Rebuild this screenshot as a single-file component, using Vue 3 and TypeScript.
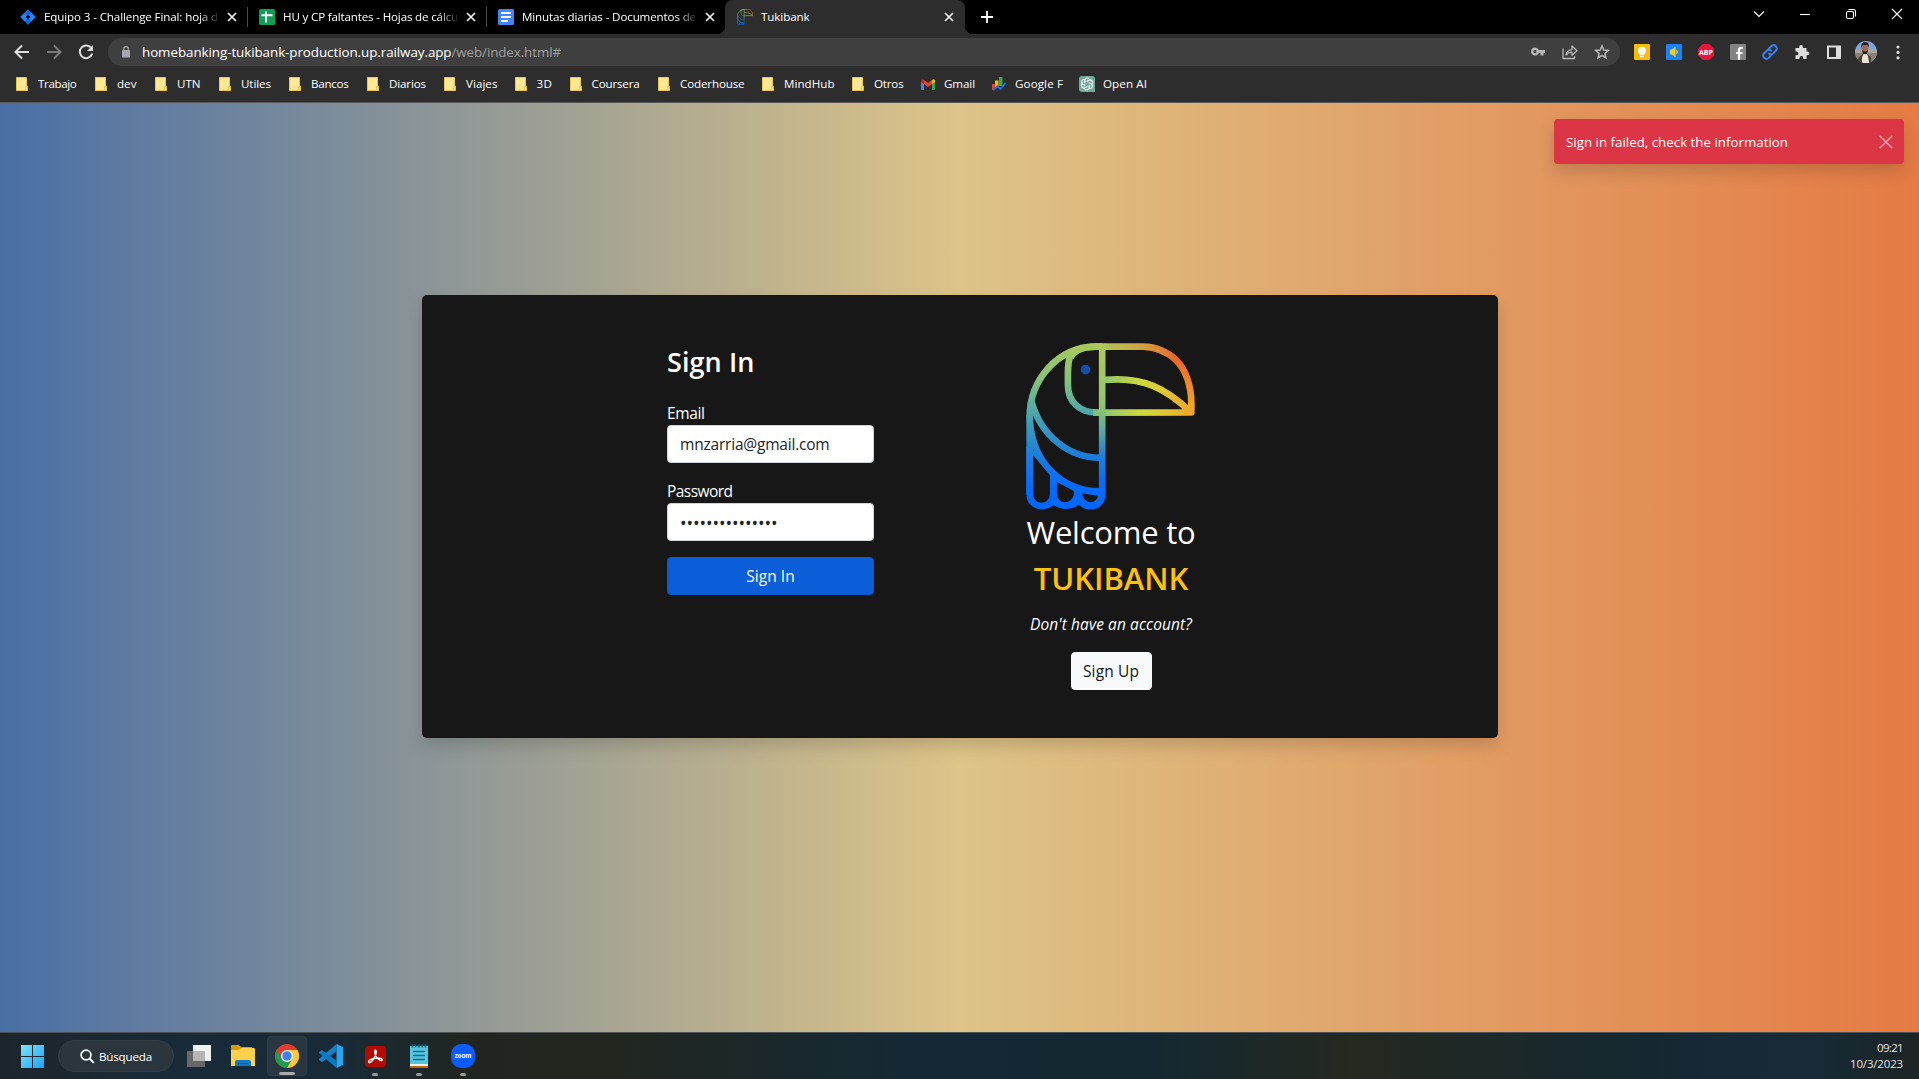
<script setup lang="ts">
type IconName = 'folder' | 'gmail' | 'finance' | 'openai'

/* label, entry start, label start, label end, icon */
const raw: [string, number, number, number, IconName][] = [
  ['Trabajo', 16, 38, 76.5, 'folder'],
  ['dev', 95, 117, 136.5, 'folder'],
  ['UTN', 155, 177, 200.5, 'folder'],
  ['Utiles', 219, 241, 271, 'folder'],
  ['Bancos', 289, 311, 348.5, 'folder'],
  ['Diarios', 367, 389, 426, 'folder'],
  ['Viajes', 444, 466, 497.5, 'folder'],
  ['3D', 515, 536.5, 552.5, 'folder'],
  ['Coursera', 570, 591.5, 639.5, 'folder'],
  ['Coderhouse', 658, 680, 744.5, 'folder'],
  ['MindHub', 762, 784, 834.5, 'folder'],
  ['Otros', 852, 874, 903.5, 'folder'],
  ['Gmail', 921, 944, 975, 'gmail'],
  ['Google F', 992, 1015, 1063, 'finance'],
  ['Open AI', 1079, 1103, 1147, 'openai'],
]
const bookmarks = raw.map(([label, x, tx, end, icon], i) => ({
  label,
  icon,
  text: end - tx,
  gap: tx - x,
  width: (raw[i + 1] ? raw[i + 1][1] : 1160) - x,
}))

const tabs = [
  { icon: 'jira', title: 'Equipo 3 - Challenge Final: hoja d', fit: 174 },
  { icon: 'sheets', title: 'HU y CP faltantes - Hojas de cálcu', fit: 175 },
  { icon: 'docs', title: 'Minutas diarias - Documentos de', fit: 174 },
]

/* Spreads the letters of a label over a given width. */
const vFit = {
  mounted(el: HTMLElement, b: { value: number }) {
    const n = (el.textContent || '').length
    const w = el.getBoundingClientRect().width
    el.style.letterSpacing = `${(b.value - w) / n}px`
  },
}
</script>

<template>
  <div class="screen">
    <svg width="0" height="0" class="defs">
      <defs>
        <linearGradient id="body" gradientUnits="userSpaceOnUse" x1="0" y1="70" x2="0" y2="560">
          <stop offset="0" stop-color="#abc95a" /><stop offset=".22" stop-color="#86c27a" />
          <stop offset=".4" stop-color="#55a9a4" /><stop offset=".53" stop-color="#3596c2" />
          <stop offset=".7" stop-color="#1b7bdf" /><stop offset=".86" stop-color="#0a6cf6" /><stop offset="1" stop-color="#0066ff" />
        </linearGradient>
        <linearGradient id="post" gradientUnits="userSpaceOnUse" x1="0" y1="70" x2="0" y2="560">
          <stop offset="0" stop-color="#b0ca56" /><stop offset=".38" stop-color="#92c56e" />
          <stop offset=".52" stop-color="#5fae9a" /><stop offset=".68" stop-color="#2381d6" /><stop offset=".84" stop-color="#0a6cf6" /><stop offset="1" stop-color="#0066ff" />
        </linearGradient>
        <linearGradient id="top" gradientUnits="userSpaceOnUse" x1="290" y1="0" x2="530" y2="0">
          <stop offset="0" stop-color="#abc95a" /><stop offset=".35" stop-color="#c2b44e" /><stop offset=".62" stop-color="#d59c42" /><stop offset="1" stop-color="#ee682a" />
        </linearGradient>
        <linearGradient id="tip" gradientUnits="userSpaceOnUse" x1="0" y1="120" x2="0" y2="260">
          <stop offset="0" stop-color="#ee682a" /><stop offset="1" stop-color="#f0a828" />
        </linearGradient>
        <linearGradient id="low" gradientUnits="userSpaceOnUse" x1="240" y1="0" x2="580" y2="0">
          <stop offset="0" stop-color="#6cb38e" /><stop offset=".2" stop-color="#8dc474" /><stop offset=".52" stop-color="#cad93e" /><stop offset=".7" stop-color="#dccc38" /><stop offset="1" stop-color="#f0a428" />
        </linearGradient>
        <symbol id="toucan" viewBox="78 68 508 502">
          <g fill="none" stroke-width="20">
            <path stroke="url(#body)" d="M307 79H285C172 81 89 180 89 290V525" />
            <path stroke="url(#body)" d="M212 104C205 120 204 135 204 160V195C204 245 240 277 290 277M212 112C222 92 250 79 290 79" />
            <path stroke="url(#body)" d="M95 245C122 345 205 413 300 413M89 285C91 425 185 514 300 514" />
            <path stroke="url(#top)" d="M285 79H430C472 80 507 98 531 121" />
            <path stroke="url(#tip)" d="M530 120C560 150 575 200 575 250V272" />
            <path stroke="url(#low)" stroke-linejoin="round" d="M280 277.500L575 277C500 205 430 168 315 179" />
            <path stroke="url(#post)" d="M307 70V525" />
          </g>
          <path fill="url(#body)" fill-rule="evenodd" d="M79 380L97 388L150 447Q205 503 297 507H317V523C317 567 267 583 237 554C213 571 185 571 161 556C127 581 79 566 79 522ZM99 405V520C99 558 150 558 150 520V465ZM171 486V520C171 556 217 556 223 520Q224 514 217 510ZM247 520C250 555 291 553 294 527Z" />
          <circle cx="257" cy="148" r="14.500" fill="#154fae" />
        </symbol>
      </defs>
    </svg>

    <header class="tabbar">
      <div v-for="t in tabs" :key="t.title" class="tab">
        <svg v-if="t.icon === 'jira'" class="fav" viewBox="0 0 16 16"><path fill="#2684ff" d="M8 .2 15.800 8 8 15.800 .2 8Z" /><path fill="#0052cc" d="M8 .2 11.500 3.700 8 7 5 4.500ZM8 15.800 4.500 12.300 8 9 11 11.500Z" opacity=".55" /><path d="M8 5.700 10.300 8 8 10.300 5.700 8Z" /></svg>
        <svg v-else-if="t.icon === 'sheets'" class="fav" viewBox="0 0 16 16"><rect width="16" height="16" rx="1.500" fill="#0f9d58" /><path d="M2.500 6.200H13.500M7 2.500V13.500" stroke="#fff" stroke-width="2" /></svg>
        <svg v-else class="fav" viewBox="0 0 16 16"><rect width="16" height="16" rx="1.500" fill="#4285f4" /><path d="M3 4H13M3 8H13M3 12H10" stroke="#fff" stroke-width="1.800" /></svg>
        <span class="title fade"><span v-fit="t.fit" class="t">{{ t.title }}</span></span>
        <svg class="x" viewBox="0 0 10 10"><path d="M1 1 9 9M9 1 1 9" /></svg>
      </div>
      <div class="tab active">
        <svg class="fav"><use href="#toucan" opacity=".85" /></svg>
        <span class="title"><span v-fit="48.500" class="t">Tukibank</span></span>
        <svg class="x" viewBox="0 0 10 10"><path d="M1 1 9 9M9 1 1 9" /></svg>
      </div>
      <svg class="plus" viewBox="0 0 12 12"><path d="M6 0V12M0 6H12" stroke="#fff" stroke-width="1.800" /></svg>
      <div class="win">
        <svg viewBox="0 0 12 12"><path d="M1 3.500 6 8.500 11 3.500" /></svg>
        <svg viewBox="0 0 12 12"><path d="M1 6.500H11" /></svg>
        <svg viewBox="0 0 12 12"><rect x="1.500" y="3.500" width="7" height="7" rx="1.500" /><path d="M3.500 1.500H8.500Q10.500 1.500 10.500 3.500V8.500" /></svg>
        <svg viewBox="0 0 12 12"><path d="M1 1 11 11M11 1 1 11" /></svg>
      </div>
    </header>

    <div class="toolbar">
      <svg class="nav" viewBox="0 0 16 16"><path d="M15 8H2M8 1.500 1.500 8 8 14.500" /></svg>
      <svg class="nav off" viewBox="0 0 16 16"><path d="M1 8H14M8 1.500 14.500 8 8 14.500" /></svg>
      <svg class="nav" viewBox="0 0 16 16"><path d="M13.500 4.500A6.300 6.300 0 1 0 14.200 9.500" /><path d="M15 1V7H9Z" fill="#dedede" stroke="none" /></svg>
      <div class="omnibox">
        <svg class="lock" viewBox="0 0 8 12"><rect y="4" width="8" height="7.500" rx="1" fill="#a6a9ad" /><path d="M1.700 4.500V3A2.300 2.300 0 0 1 6.300 3V4.500" fill="none" stroke="#a6a9ad" stroke-width="1.200" /></svg>
        <span v-fit="309.500" class="t host">homebanking-tukibank-production.up.railway.app</span><span v-fit="109.500" class="t path">/web/index.html#</span>
        <div class="omni-icons">
          <svg viewBox="0 0 16 16"><path fill="#b6b6b6" fill-rule="evenodd" d="M5 3.500A4 4 0 1 0 8.800 9H10.500V11.500H13.500V9H15V6H8.800A4 4 0 0 0 5 3.500ZM5 6A1.600 1.600 0 1 1 5 9.200 1.600 1.600 0 0 1 5 6Z" /></svg>
          <svg viewBox="0 0 16 16"><path d="M1 4.500V14.500H12.500V12M4 11C4.500 7.500 6.500 5.800 10 5.600V2L15 6.800 10 11.300V8.200C7.500 8.200 5.500 9 4 11Z" fill="none" stroke="#b6b6b6" stroke-width="1.300" stroke-linejoin="round" /></svg>
          <svg viewBox="0 0 16 16"><path d="M8 1.800 9.800 6 14.400 6.400 10.900 9.400 12 14 8 11.500 4 14 5.100 9.400 1.600 6.400 6.200 6Z" fill="none" stroke="#b6b6b6" stroke-width="1.500" /></svg>
        </div>
      </div>
      <div class="exts">
        <svg viewBox="0 0 16 16"><rect width="16" height="16" rx="1" fill="#fbbc04" /><circle cx="8" cy="6.800" r="4" fill="#fff" /><path d="M6 9H10V11H6ZM6 11.800H10V13.300H6Z" fill="#fff" /></svg>
        <svg viewBox="0 0 16 16"><rect width="16" height="16" rx="1" fill="#1a82f7" /><path d="M4 5.500H6L9.500 2.500V13.500L6 10.500H4ZM10.300 5.500V10.500L11.800 9V7Z" fill="#f2cf2e" /></svg>
        <svg viewBox="0 0 16 16"><path d="M4.700 0H11.300L16 4.700V11.300L11.300 16H4.700L0 11.300V4.700Z" fill="#e8163c" /><text x="8" y="10.600" text-anchor="middle" font-size="7" font-weight="700" fill="#fff" textLength="14" lengthAdjust="spacingAndGlyphs">ABP</text></svg>
        <svg viewBox="0 0 16 16"><rect width="16" height="16" rx="1" fill="#858585" /><path d="M9 16V6Q9 3.500 12.800 4M6 9H12.500" fill="none" stroke="#fff" stroke-width="2.200" /></svg>
        <svg viewBox="0 0 16 16"><g fill="none" stroke="#3f7ee8" stroke-width="2" stroke-linecap="round"><path d="M7 4.500 9.500 2A3.200 3.200 0 0 1 14 6.500L11 9.500A3.200 3.200 0 0 1 6.800 9.500" /><path d="M9 11.500 6.500 14A3.200 3.200 0 0 1 2 9.500L5 6.500A3.200 3.200 0 0 1 9.200 6.500" /></g></svg>
        <svg viewBox="0 0 16 16"><path fill="#dedede" d="M1.500 4H5.200V3A1.900 1.900 0 0 1 9 3V4H12.500V7.500H13.500A1.900 1.900 0 0 1 13.500 11.300H12.500V15H9.300V14A1.900 1.900 0 0 0 5.500 14V15H1.500V11.300H2.500A1.900 1.900 0 0 0 2.500 7.500H1.500Z" /></svg>
        <svg viewBox="0 0 16 16"><path fill="#dedede" fill-rule="evenodd" d="M1 1.500H15V15H1ZM3 3.500V13H10V3.500Z" /></svg>
        <svg class="avatar" viewBox="0 0 22 22"><defs><clipPath id="face"><circle cx="11" cy="11" r="11" /></clipPath></defs><g clip-path="url(#face)"><rect width="22" height="22" fill="#7fa6dd" /><path d="M0 9H22V22H0Z" fill="#8c8274" /><path d="M0 9H22V12H0Z" fill="#a5a6a2" /><path d="M6 22 8 14 12 13 14 22Z" fill="#f0e8da" /><path d="M2 22 4 16 8 13V22ZM14 22 12.500 13.500 16 16V22Z" fill="#4a3c38" /><path d="M7 16 9 13 13 15 14 22H7Z" fill="#ece4d6" /><ellipse cx="10" cy="7.500" rx="3.300" ry="5" fill="#a2694d" /><path d="M6 7Q6 1 10 1T14 6L12 4H8ZM7 9Q10 12 13 9L12 13H8Z" fill="#2c2020" /></g></svg>
        <svg viewBox="0 0 16 16"><g fill="#dedede"><circle cx="8" cy="3" r="1.600" /><circle cx="8" cy="8.400" r="1.600" /><circle cx="8" cy="13.800" r="1.600" /></g></svg>
      </div>
    </div>

    <nav class="bookmarks">
      <div v-for="b in bookmarks" :key="b.label" class="bm" :style="{ width: b.width + 'px' }">
        <span class="bm-icon" :style="{ width: b.gap + 'px' }">
          <svg v-if="b.icon === 'folder'" width="12" height="14" viewBox="0 0 12 14"><path d="M.5.500H10.500V9H11.500V13.500H.5Z" fill="#ffe793" stroke="#e9c652" /><path d="M9.500 13V9.500H11" fill="none" stroke="#e9c652" /></svg>
          <svg v-else-if="b.icon === 'gmail'" width="14" height="11" viewBox="0 0 14 11"><path fill="#4285f4" d="M0 2V10Q0 11 1 11H3V4Z" /><path fill="#34a853" d="M14 2V10Q14 11 13 11H11V4Z" /><path fill="#ea4335" d="M3 1 7 4 11 1V5L7 8 3 5Z" /><path fill="#c5221f" d="M0 1.500Q1-.5 3 1V5L0 3Z" /><path fill="#fbbc04" d="M14 1.500Q13-.5 11 1V5L14 3Z" /></svg>
          <svg v-else-if="b.icon === 'finance'" width="14" height="14" viewBox="0 0 14 14"><path fill="#ea4335" d="M0 7H3.500V12L0 13Z" /><path fill="#fbbc04" d="M3 3.500H6.500V10L3 11Z" /><path fill="#34a853" d="M7 0H10.500V9H7Z" /><path d="M1 13 5.500 9.500 8.500 12 13.500 6" fill="none" stroke="#1a73e8" stroke-width="1.900" /></svg>
          <svg v-else width="16" height="16" viewBox="0 0 16 16"><path d="M3 0H13Q16 0 16 3V16H3Q0 16 0 13V3Q0 0 3 0Z" fill="#74aa9c" /><g fill="none" stroke="#fff" stroke-width=".9"><path v-for="a in 6" :key="a" :transform="`rotate(${a * 60} 8 8)`" d="M5.800 7.200V4.200A2.600 2.600 0 0 1 10.600 3.200M8 5.300 10.600 3.800A2.600 2.600 0 0 1 13 5" /></g></svg>
        </span>
        <span v-fit="b.text" class="t">{{ b.label }}</span>
      </div>
    </nav>

    <main class="page">
      <div class="toast">
        <span v-fit="222" class="t">Sign in failed, check the information</span>
        <svg viewBox="0 0 14 14"><path d="M.7.700 13.300 13.300M13.300.700.7 13.300" stroke="#fff" stroke-width="1.500" opacity=".55" /></svg>
      </div>
      <section class="card">
        <form class="form" @submit.prevent>
          <h2><span v-fit="87.500" class="t">Sign In</span></h2>
          <label><span v-fit="37.500" class="t">Email</span></label>
          <div class="input"><span v-fit="149.500" class="t">mnzarria@gmail.com</span></div>
          <label><span v-fit="65.500" class="t">Password</span></label>
          <div class="input secret"><span v-fit="97.500" class="t">•••••••••••••••</span></div>
          <button class="btn primary"><span v-fit="48.500" class="t">Sign In</span></button>
        </form>
        <div class="brand">
          <svg class="logo"><use href="#toucan" /></svg>
          <div class="welcome"><span v-fit="169" class="t">Welcome to</span></div>
          <div class="name"><span v-fit="154.500" class="t">TUKIBANK</span></div>
          <div class="ask"><span v-fit="162" class="t">Don't have an account?</span></div>
          <button class="btn light"><span v-fit="56" class="t">Sign Up</span></button>
        </div>
      </section>
    </main>

    <footer class="taskbar">
      <div class="slot start"><svg width="23" height="23" viewBox="0 0 23 23"><defs><linearGradient id="w" x1="0" y1="0" x2="1" y2="1"><stop stop-color="#7fe0fb" /><stop offset="1" stop-color="#1ba4f5" /></linearGradient></defs><path fill="url(#w)" d="M0 0H11V11H0ZM12 0H23V11H12ZM0 12H11V23H0ZM12 12H23V23H12Z" /></svg></div>
      <div class="search">
        <svg width="15" height="15" viewBox="0 0 15 15"><circle cx="6" cy="6" r="4.900" fill="none" stroke="#fff" stroke-width="1.700" /><path d="M9.500 9.500 13.800 13.800" stroke="#fff" stroke-width="1.900" /></svg>
        <span v-fit="53" class="t">Búsqueda</span>
      </div>
      <div class="slot first"><svg width="24" height="22" viewBox="0 0 24 22"><rect x="6" width="18" height="16" fill="#f1f1f1" /><rect y="6" width="18" height="16" fill="#686868" /><path d="M6 6H18V16H6Z" fill="#b5b5b5" /></svg></div>
      <div class="slot"><svg width="24" height="22" viewBox="0 0 24 22"><path fill="#dc9c08" d="M0 1Q0 0 1 0H8L10 2H21V8H0Z" /><path fill="#ffd04a" d="M0 5H8L10 3H23Q24 3 24 4V21H0Z" /><path d="M4 21V17Q4 15 6 15H18Q20 15 20 17V21Z" fill="#117ac8" /><path d="M7 18H17V19.200H7Z" fill="#0b589b" /></svg></div>
      <div class="slot on"><svg width="24" height="24" viewBox="0 0 24 24"><circle cx="12" cy="12" r="12" fill="#e33b2e" /><path fill="#1e9b4b" d="M1.600 6A12 12 0 0 0 12 24L17.200 15H6.800Z" /><path fill="#fcc934" d="M12 24A12 12 0 0 0 22.400 6H12L17.200 15Z" /><circle cx="12" cy="12" r="6" fill="#fff" /><circle cx="12" cy="12" r="4.700" fill="#3c7ff0" /></svg></div>
      <div class="slot"><svg width="24" height="24" viewBox="0 0 24 24"><path d="M17.500 0 24 3V21L17.500 24Z" fill="#2aa5ee" /><path d="M17.500 0V7L3 18 0 16V15Z" fill="#1583cc" /><path d="M17.500 24V17L3 6 0 8V9Z" fill="#087bc5" /></svg></div>
      <div class="slot dot"><svg width="21" height="21" viewBox="0 0 21 21"><rect width="21" height="21" rx="3.500" fill="#b30b00" /><path d="M4 16.500C2.500 14.500 7 12.500 11 12.200 15 11.800 18 12.500 17 14.300 15.500 15.800 10 11 9.800 7 9.300 3.500 11.500 3.500 11.300 6.500 11 10 6 18 4 16.500Z" fill="none" stroke="#fff" stroke-width="1.400" /></svg></div>
      <div class="slot dot"><svg width="18" height="24" viewBox="0 0 18 24"><path d="M0 2H18V22H0Z" fill="#55c6df" /><path d="M0 20H18V22H0Z" fill="#eef3f3" /><path d="M0 22H18V24H0Z" fill="#b96718" /><path d="M2.500 0V3.500M5.700 0V3.500M9 0V3.500M12.300 0V3.500M15.500 0V3.500" stroke="#0d6078" stroke-width="1.600" /><path d="M3 7.500H15M3 11.500H15M3 15.500H15" stroke="#087387" stroke-width="1.700" /></svg></div>
      <div class="slot dot"><svg width="24" height="24" viewBox="0 0 24 24"><rect width="24" height="24" rx="10" fill="#0b5cff" /><text x="12" y="14" text-anchor="middle" font-size="7.500" font-weight="700" fill="#fff" textLength="17" lengthAdjust="spacingAndGlyphs">zoom</text></svg></div>
      <div class="clock"><span v-fit="26" class="t">09:21</span><span v-fit="53" class="t">10/3/2023</span></div>
    </footer>
  </div>
</template>

<style>
body { margin: 0; overflow: hidden; background: #000; }
</style>

<style scoped>
.screen { width: 1919px; height: 1079px; display: flex; flex-direction: column; overflow: hidden; font-family: "Open Sans", "Noto Sans", sans-serif; color: #fff; font-size: 11.600px; }
.screen * { box-sizing: border-box; }
.screen svg { flex: none; display: block; }
.defs { position: absolute; }
.t { display: inline-block; white-space: nowrap; flex: none; }

.tabbar { height: 34px; flex: none; display: flex; background: #000; padding-left: 8px; }
.tab { width: 239px; height: 34px; display: flex; align-items: center; padding-left: 12px; position: relative; flex: none; }
.tab:not(.active):nth-child(-n+2)::after { content: ''; position: absolute; right: -1px; top: 7px; height: 20px; width: 1px; background: #4b4b4b; }
.fav { width: 16px; height: 16px; margin-right: 8px; }
.title { width: 176px; line-height: 20px; height: 20px; margin-right: 7px; display: block; }
.fade { -webkit-mask-image: linear-gradient(90deg, #000 155px, transparent 177px); mask-image: linear-gradient(90deg, #000 155px, transparent 177px); }
.x { width: 10px; height: 10px; stroke: #f2f2f2; stroke-width: 1.700; }
.active { width: 240px; background: #2d2d2d; border-radius: 8px 8px 0 0; }
.active::before, .active::after { content: ''; position: absolute; bottom: 0; width: 8px; height: 8px; }
.active::before { left: -8px; background: radial-gradient(circle at 0 0, transparent 8px, #2d2d2d 8.500px); }
.active::after { right: -8px; background: radial-gradient(circle at 100% 0, transparent 8px, #2d2d2d 8.500px); }
.plus { width: 12px; height: 12px; margin: 11px 0 0 16px; }
.win { margin-left: auto; display: flex; gap: 34px; padding: 8px 16px 0 0; }
.win svg { width: 12px; height: 12px; fill: none; stroke: #fff; stroke-width: 1.100; }

.toolbar { height: 35px; flex: none; background: #2d2d2d; display: flex; align-items: center; padding: 1px 13px 0 14px; }
.nav { width: 16px; height: 16px; margin-right: 16px; fill: none; stroke: #dedede; stroke-width: 2; }
.nav.off { stroke: #797979; }
.nav:nth-child(3) { margin-right: 14px; }
.omnibox { width: 1512px; height: 28px; border-radius: 14px; background: #3f3f3f; display: flex; align-items: center; font-size: 13.400px; flex: none; }
.lock { width: 8px; height: 12px; margin: 0 12px 0 14px; }
.path { color: #9f9f9f; }
.omni-icons { margin-left: auto; display: flex; gap: 16px; padding-right: 10px; }
.omni-icons svg { width: 16px; height: 16px; }
.exts { display: flex; gap: 16px; align-items: center; margin-left: 14px; }
.exts svg { width: 16px; height: 16px; }
.exts .avatar { width: 22px; height: 22px; margin: 0 -3px; }

.bookmarks { height: 34px; flex: none; background: #2d2d2d; border-bottom: 1px solid #575757; display: flex; padding: 0 0 3px 16px; }
.bm { display: flex; align-items: center; flex: none; }
.bm .t { margin-top: -1px; }
.bm-icon { flex: none; display: block; }

.page { flex: 1; position: relative; background: linear-gradient(90deg, #4a6fa5 0%, #ddc488 50%, #e57a44 100%); }
.page::before { content: ''; display: table; }
.toast { position: absolute; right: 15px; top: 16px; width: 350px; height: 45px; border-radius: 4px; background: #dc3545; display: flex; align-items: center; justify-content: space-between; padding: 0 11px 0 12px; font-size: 13.300px; box-shadow: 0 8px 16px rgba(0, 0, 0, .15); }
.toast svg { width: 14px; height: 14px; }
.card { width: 1076px; height: 443px; margin: 192px 0 0 422px; background: #171717; border-radius: 5px; display: flex; box-shadow: 0 8px 16px rgba(0, 0, 0, .15); padding: 48px 0 0 245px; font-size: 15.500px; }
.form { width: 207px; display: flex; flex-direction: column; }
h2 { margin: 0 0 24px; height: 34px; line-height: 37px; font-size: 27px; font-weight: 600; }
label { height: 24px; line-height: 25px; }
.input { height: 38px; border: 1px solid #ced4da; border-radius: 4px; background: #fff; color: #212529; padding: 0 12px; line-height: 37px; margin-bottom: 16px; }
.secret { line-height: 38px; font-size: 17.500px; }
.btn { height: 38px; border: 1px solid; border-radius: 4px; font: inherit; line-height: 37px; padding: 0; display: flex; justify-content: center; }
.primary { background: #0b5ed7; border-color: #0a58ca; color: #fff; }
.brand { margin-left: 152px; width: 170px; display: flex; flex-direction: column; align-items: center; white-space: nowrap; }
.logo { width: 169px; height: 167px; margin-left: -2px; }
.welcome, .name { height: 46px; line-height: 44px; font-size: 31px; }
.name { font-weight: 600; color: #ffc107; }
.ask { font-style: italic; height: 24px; line-height: 24px; margin: 10px 0 16px; }
.light { width: 81px; background: #f8f9fa; border-color: #f8f9fa; color: #171717; }

.taskbar { height: 47px; flex: none; border-top: 1px solid #4a5054; display: flex; align-items: center; padding-right: 16px; background: linear-gradient(90deg, #1c252c 0, #192b38 180px, #182a38 330px, #20261f 470px, #22261f 600px, #152934 900px, #142832 1150px, #24281f 1350px, #152832 1650px, #172a36 1810px, #1c2424 1919px); }
.slot { width: 40px; height: 40px; margin-right: 4px; display: flex; align-items: center; justify-content: center; position: relative; border-radius: 4px; flex: none; }
.start { margin: 0 6px 0 12px; }
.search { width: 116px; height: 32px; border-radius: 16px; background: #2b353d; border: 1px solid #313b42; display: flex; align-items: center; padding-left: 21px; gap: 4px; font-size: 11.600px; }
.first { margin-left: 5px; }
.on { background: #273640; border: 1px solid #303e47; }
.on::after, .dot::after { content: ''; position: absolute; bottom: 0; width: 6px; height: 3px; border-radius: 2px; background: #999; }
.on::after { width: 16px; background: #aaa; }
.clock { margin-left: auto; display: flex; flex-direction: column; align-items: flex-end; line-height: 16px; font-size: 11.500px; color: #e4e4e4; }
</style>
